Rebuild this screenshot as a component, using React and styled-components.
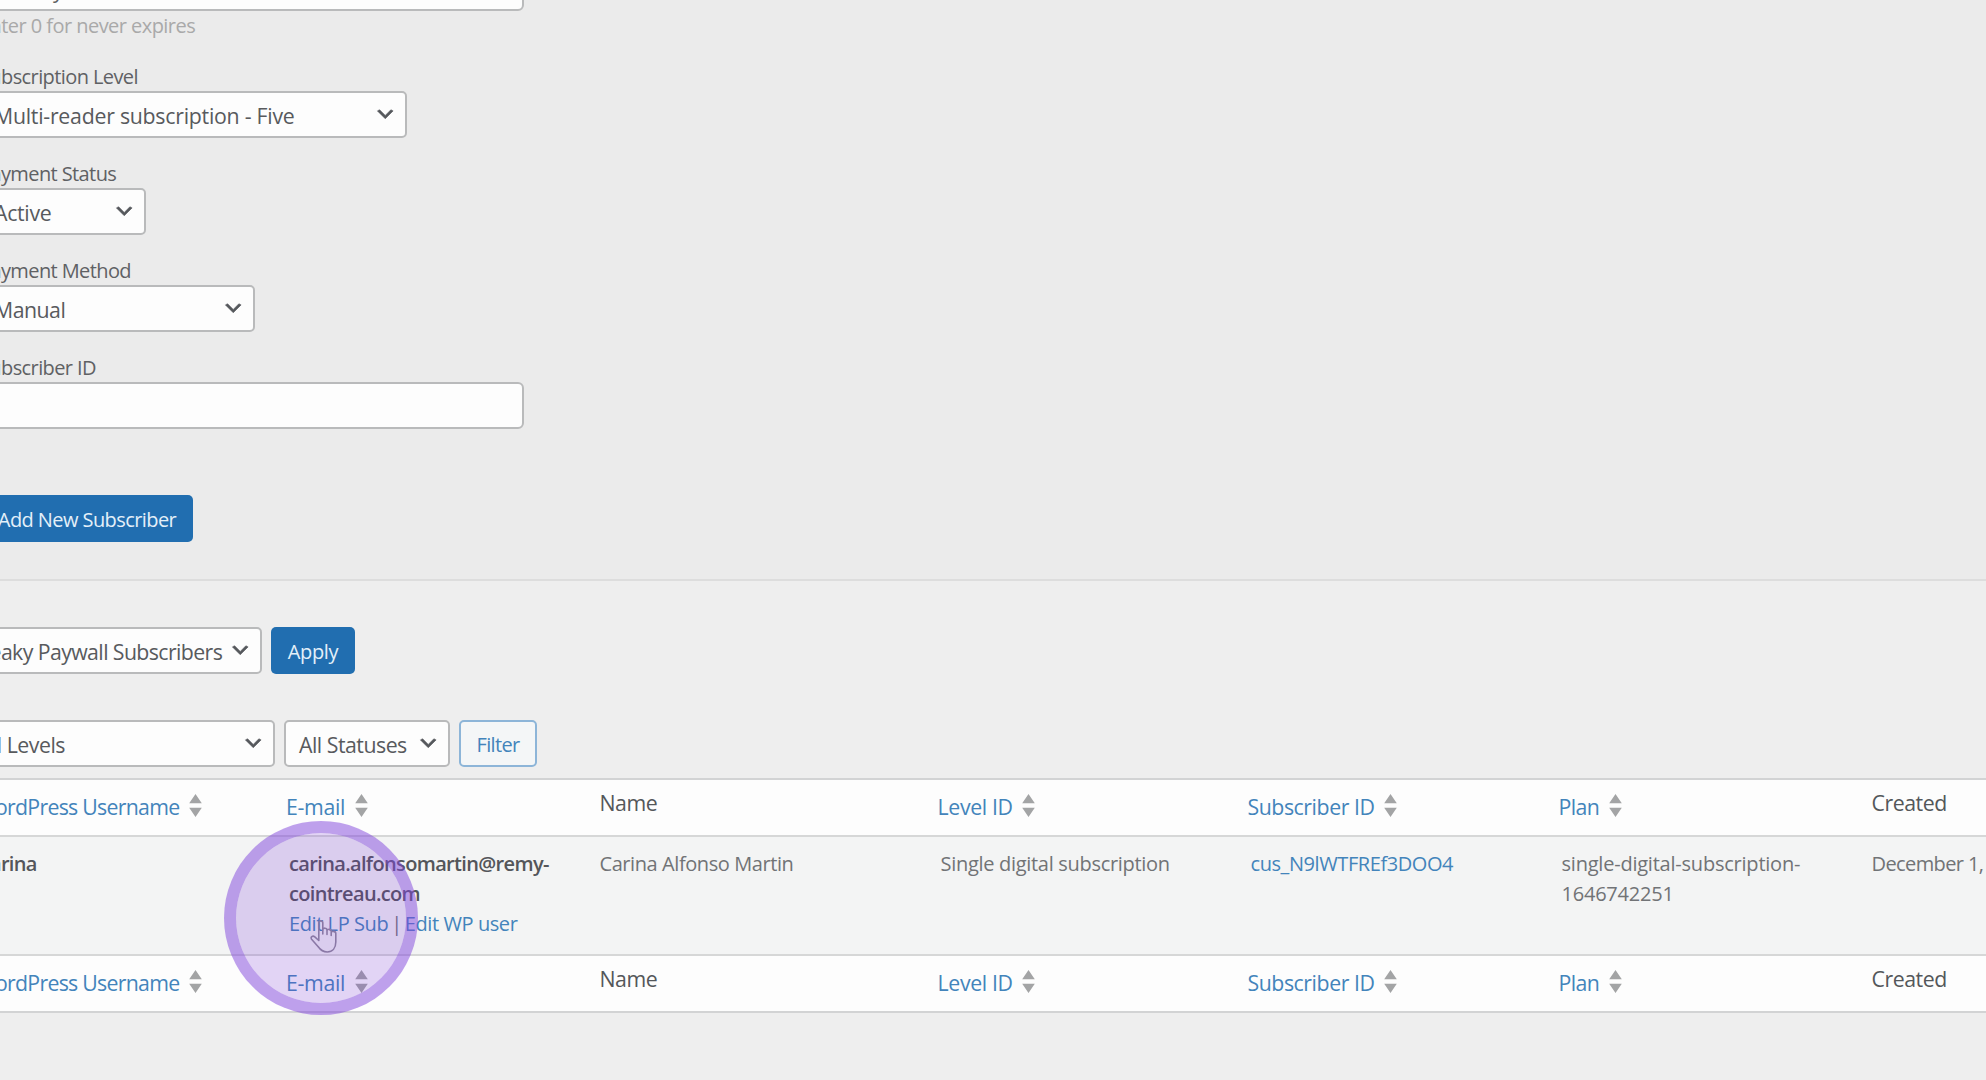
import React from 'react';
import styled, { createGlobalStyle } from 'styled-components';

const columns = [
  { key: 'username', label: 'WordPress Username', sortable: true, track: '-0.72px' },
  { key: 'email', label: 'E-mail', sortable: true, track: '-0.3px' },
  { key: 'name', label: 'Name' },
  { key: 'level', label: 'Level ID', sortable: true, track: '-0.35px' },
  { key: 'subscriber', label: 'Subscriber ID', sortable: true },
  { key: 'plan', label: 'Plan', sortable: true, track: '-0.6px' },
  { key: 'created', label: 'Created' },
];

const subscribers = [
  {
    username: 'Carina',
    email: 'carina.alfonsomartin@remy-cointreau.com',
    name: 'Carina Alfonso Martin',
    level: 'Single digital subscription',
    subscriber: 'cus_N9lWTFREf3DOO4',
    plan: 'single-digital-subscription-1646742251',
    created: 'December 1, 2022',
  },
];

function Select({ value, width, track }) {
  return (
    <SelectBox $width={width} $track={track}>
      <span>{value}</span>
      <svg width='22.5' height='22.5' viewBox='0 0 20 20'>
        <path d='M5 6l5 5 5-5 2 1-7 7-7-7 2-1z' fill='#55585c' stroke='#55585c' strokeWidth='0.5' />
      </svg>
    </SelectBox>
  );
}

function HeadingRow({ footer }) {
  return (
    <Headings $footer={footer}>
      {columns.map((col) =>
        col.sortable ? (
          <SortHeading key={col.key} $track={col.track}>
            <span>{col.label}</span>
            <svg width='13' height='23' viewBox='0 0 13 23'>
              <path d='M6.5 0L12.8 9.3H.2zM6.5 23L.2 13.7h12.6z' fill='#a3a4a5' />
            </svg>
          </SortHeading>
        ) : (
          <Heading key={col.key}>{col.label}</Heading>
        )
      )}
    </Headings>
  );
}

function SubscriberRow({ subscriber }) {
  return (
    <Row>
      <Cell $inset $strong $track='-0.68px'>{subscriber.username}</Cell>
      <Cell $inset $track='-0.65px'>
        <strong>{subscriber.email}</strong>
        <RowActions>
          <a>Edit LP Sub</a>
          <Divider>|</Divider>
          <a>Edit WP user</a>
        </RowActions>
      </Cell>
      <Cell>{subscriber.name}</Cell>
      <Cell $inset $track='-0.3px'>{subscriber.level}</Cell>
      <Cell $inset>
        <a>{subscriber.subscriber}</a>
      </Cell>
      <Cell $inset $track='-0.22px'>{subscriber.plan}</Cell>
      <Cell $track='-0.6px'>{subscriber.created}</Cell>
    </Row>
  );
}

function ClickHighlight() {
  return (
    <Highlight>
      <svg width='28' height='34' viewBox='0 0 28 34' fill='none' stroke='#8a78a6' strokeWidth='1.6' strokeLinejoin='round' strokeLinecap='round'>
        <path d='M8.8 20.5V3C8.8.2 12.8.2 12.8 3V14V9.8C12.8 7.6 17 7.6 17 10V14.5V10.8C17 8.8 21.2 8.8 21.2 11V15.5V12.6C21.2 10.8 25.8 10.8 25.8 13.4V22C25.8 28 22.5 32 17.2 32C12.5 32 10.2 29.6 8 26.5L1.6 19.2C.2 17 2.6 15.2 4.8 16.8Z' />
      </svg>
    </Highlight>
  );
}

export default function App() {
  return (
    <Page>
      <GlobalStyle />
      <Form>
        <TextInput $width={545}>January</TextInput>
        <Hint>Enter 0 for never expires</Hint>
        <Field>
          <Label>Subscription Level</Label>
          <Select value='Multi-reader subscription - Five' width={428} track='-0.25px' />
        </Field>
        <Field>
          <Label>Payment Status</Label>
          <Select value='Active' width={167} track='-0.3px' />
        </Field>
        <Field>
          <Label>Payment Method</Label>
          <Select value='Manual' width={276} />
        </Field>
        <Field>
          <Label>Subscriber ID</Label>
          <TextInput $width={545} />
        </Field>
        <SubmitButton $width={214}>Add New Subscriber</SubmitButton>
      </Form>
      <ListSection>
        <Toolbar>
          <Select value='Leaky Paywall Subscribers' width={298} track='-0.6px' />
          <PrimaryButton $width={84}>Apply</PrimaryButton>
        </Toolbar>
        <Toolbar>
          <Select value='All Levels' width={311} />
          <Select value='All Statuses' width={166} />
          <OutlineButton $width={78}>Filter</OutlineButton>
        </Toolbar>
        <Table>
          <HeadingRow />
          {subscribers.map((subscriber) => (
            <SubscriberRow key={subscriber.subscriber} subscriber={subscriber} />
          ))}
          <HeadingRow footer />
        </Table>
      </ListSection>
      <ClickHighlight />
    </Page>
  );
}

const GlobalStyle = createGlobalStyle`
  * {
    box-sizing: border-box;
  }
  body {
    margin: 0;
    overflow: hidden;
    background: #eeeeee;
    font-family: 'Open Sans', 'Noto Sans', sans-serif;
    font-size: 20px;
    letter-spacing: -0.55px;
    color: #5f6164;
  }
  a {
    color: #4384bb;
    cursor: pointer;
  }
`;

/* The panel is scrolled sideways and down, so its start lies outside of the window. */
const Page = styled.div`
  position: relative;
  width: 1986px;
  height: 1080px;
  overflow: hidden;
`;

const Form = styled.div`
  display: flex;
  flex-direction: column;
  align-items: flex-start;
  height: 617px;
  margin-top: -36px;
  background: #ebebeb;
  border-bottom: 2px solid #dddddd;

  & > * {
    margin-left: -21px;
    flex-shrink: 0;
  }
`;

const Field = styled.div`
  display: flex;
  flex-direction: column;
  margin-bottom: 21px;
`;

const Label = styled.label`
  line-height: 29px;
  letter-spacing: -0.6px;
`;

const Hint = styled.div`
  line-height: 30px;
  margin-bottom: 21px;
  color: #a9a9a9;
`;

const control = `
  display: flex;
  align-items: center;
  height: 47px;
  background: #fdfdfd;
  border: 2px solid #b9babb;
  border-radius: 5px;
  white-space: nowrap;
`;

const TextInput = styled.div`
  ${control}
  width: ${(props) => props.$width}px;
  padding: 4px 0 0 11px;
  border-radius: 6px;
  font-size: 21.3px;
`;

const SelectBox = styled.div`
  ${control}
  justify-content: space-between;
  width: ${(props) => props.$width}px;
  padding: 1px 9px 0 13px;
  font-size: 21.3px;
  letter-spacing: ${(props) => props.$track || '-0.5px'};
  color: #585a5d;

  & svg {
    margin-top: -1px;
    flex-shrink: 0;
  }
`;

const PrimaryButton = styled.button`
  width: ${(props) => props.$width}px;
  height: 47px;
  padding: 1px 0 0;
  border: none;
  border-radius: 5px;
  background: #216eb0;
  color: #e4f0f9;
  font: inherit;
  letter-spacing: -0.35px;
`;

const SubmitButton = styled(PrimaryButton)`
  margin-top: 45px;
  padding: 1px 0 0 2px;
  letter-spacing: -0.58px;
`;

const OutlineButton = styled(PrimaryButton)`
  border: 2px solid #8db5d8;
  background: #f4f6f7;
  color: #4384bb;
  letter-spacing: -0.65px;
`;

const ListSection = styled.div`
  display: flex;
  flex-direction: column;
  padding-top: 46px;
`;

const Toolbar = styled.div`
  display: flex;
  gap: 9px;
  height: 47px;
  margin: 0 0 46px -36px;

  & + & {
    margin-bottom: 11px;
  }
`;

const Table = styled.div`
  border-top: 2px solid #d2d3d4;
  border-bottom: 2px solid #d2d3d4;
`;

const Row = styled.div`
  display: grid;
  grid-template-columns: 287px 312.5px 339px 310px 311px 312px 300px;
  height: 117px;
  padding-top: 12px;
  background: #f3f4f4;

  & > *:first-child {
    margin-left: -24px;
  }
`;

const Headings = styled(Row)`
  height: 57px;
  padding-top: 8px;
  background: #fdfdfd;
  border-top: ${(props) => (props.$footer ? '2px solid #d6d7d7' : 'none')};
  border-bottom: ${(props) => (props.$footer ? 'none' : '2px solid #d6d7d7')};
  font-size: 21.3px;
  letter-spacing: -0.45px;
  line-height: 29px;
`;

const Heading = styled.div`
  color: #54575a;
`;

const SortHeading = styled.a`
  display: flex;
  align-items: center;
  gap: 9.5px;
  height: 29px;
  margin-left: -1px;
  padding-top: 8px;
  letter-spacing: ${(props) => props.$track || 'inherit'};
  white-space: nowrap;

  & svg {
    margin-top: -3px;
  }
`;

const Cell = styled.div`
  padding-left: ${(props) => (props.$inset ? 2 : 0)}px;
  padding-right: 40px;
  line-height: 30px;
  font-weight: ${(props) => (props.$strong ? 600 : 400)};
  letter-spacing: ${(props) => props.$track || '-0.42px'};
  color: ${(props) => (props.$strong ? '#54565a' : '#717376')};

  & strong {
    font-weight: 600;
    color: #54565a;
  }

  &:last-child {
    padding-right: 0;
    white-space: nowrap;
  }
`;

const RowActions = styled.div`
  display: flex;
  letter-spacing: -0.42px;
  white-space: nowrap;
`;

const Divider = styled.span`
  margin: 0 3px;
`;

const Highlight = styled.div`
  position: absolute;
  left: 224px;
  top: 821px;
  width: 194px;
  height: 194px;
  border: 12px solid rgba(127, 67, 219, 0.5);
  border-radius: 50%;
  background: rgba(121, 48, 217, 0.2) padding-box;

  & svg {
    position: absolute;
    left: 74px;
    top: 87px;
  }
`;
